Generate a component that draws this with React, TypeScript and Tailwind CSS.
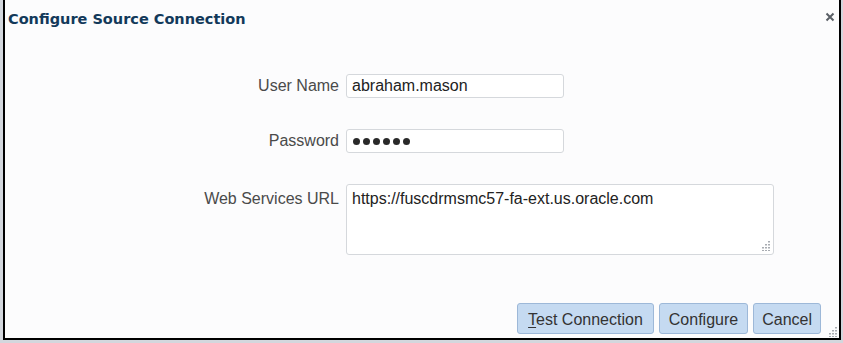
import React from 'react';

const GripDots: React.FC<{ className?: string }> = ({ className }) => (
    <svg width="10" height="10" viewBox="0 0 10 10" className={className}>
        {[
            [8, 0], [8, 3], [5, 3], [8, 6], [5, 6], [2, 6], [8, 9], [5, 9], [2, 9],
        ].map(([x, y], i) => (
            <rect key={i} x={x} y={y} width="2" height="1.5" fill="#a8acb2" />
        ))}
    </svg>
);

const App: React.FC = () => {
    return (
        <div className="w-[843px] h-[343px] bg-[#d3d7dd] font-['Liberation_Sans',Arial,sans-serif]">
            <div className="relative ml-[3px] w-[838px] h-[340px] border-x-2 border-b-2 border-black bg-[#fcfcfd] flex flex-col">
                {/* Header */}
                <div className="flex items-start justify-between pl-[3px] pt-[10px] pr-[3px]">
                    <h1 className="font-['DejaVu_Sans',Verdana,sans-serif] font-bold text-[14.5px] leading-[18px] text-[#12395a]">
                        Configure Source Connection
                    </h1>
                    <button className="mt-[1px] p-[1px]">
                        <svg width="10" height="10" viewBox="0 0 10 10">
                            <path d="M1.5 1.5 L8.5 8.5 M8.5 1.5 L1.5 8.5" stroke="#5a5f66" strokeWidth="2" />
                        </svg>
                    </button>
                </div>

                {/* Form */}
                <div className="flex flex-col gap-[31px] pt-[46px] text-[16px]">
                    <div className="flex items-center">
                        <label className="w-[334px] text-right text-[#4a4a4a]">User Name</label>
                        <input
                            readOnly
                            value="abraham.mason"
                            className="ml-[7px] w-[218px] h-[24px] px-[5px] bg-white border border-[#d5d8dc] rounded-[3px] text-[#222] outline-none"
                        />
                    </div>
                    <div className="flex items-center">
                        <label className="w-[334px] text-right text-[#4a4a4a]">Password</label>
                        <div className="ml-[7px] w-[218px] h-[24px] px-[6px] bg-white border border-[#d5d8dc] rounded-[3px] flex items-center gap-[3px]">
                            {Array.from({ length: 6 }).map((_, i) => (
                                <span key={i} className="w-[7px] h-[7px] rounded-full bg-[#2a2a2a]" />
                            ))}
                        </div>
                    </div>
                    <div className="flex items-start">
                        <label className="w-[334px] text-right text-[#4a4a4a] pt-[3px]">Web Services URL</label>
                        <div className="relative ml-[7px]">
                            <textarea
                                readOnly
                                value="https://fuscdrmsmc57-fa-ext.us.oracle.com"
                                className="block w-[428px] h-[71px] px-[5px] pt-[4px] bg-white border border-[#d5d8dc] rounded-[3px] text-[#222] resize-none outline-none leading-[19px]"
                            />
                            <GripDots className="absolute right-[4px] bottom-[4px]" />
                        </div>
                    </div>
                </div>

                {/* Footer */}
                <div className="mt-auto flex justify-end gap-[5px] pr-[18px] pb-[4px] text-[16px]">
                    <button className="h-[31px] pt-[2px] px-[10px] bg-[#c5daf1] border border-[#9db8d8] rounded-[3px] text-[#333]">
                        <span className="underline underline-offset-2">T</span>est Connection
                    </button>
                    <button className="h-[31px] pt-[2px] px-[9px] bg-[#c5daf1] border border-[#9db8d8] rounded-[3px] text-[#333]">
                        Configure
                    </button>
                    <button className="h-[31px] pt-[2px] px-[8px] bg-[#c5daf1] border border-[#9db8d8] rounded-[3px] text-[#333]">
                        Cancel
                    </button>
                </div>
                <GripDots className="absolute right-[2px] bottom-[1px]" />
            </div>
        </div>
    );
};

export default App;
